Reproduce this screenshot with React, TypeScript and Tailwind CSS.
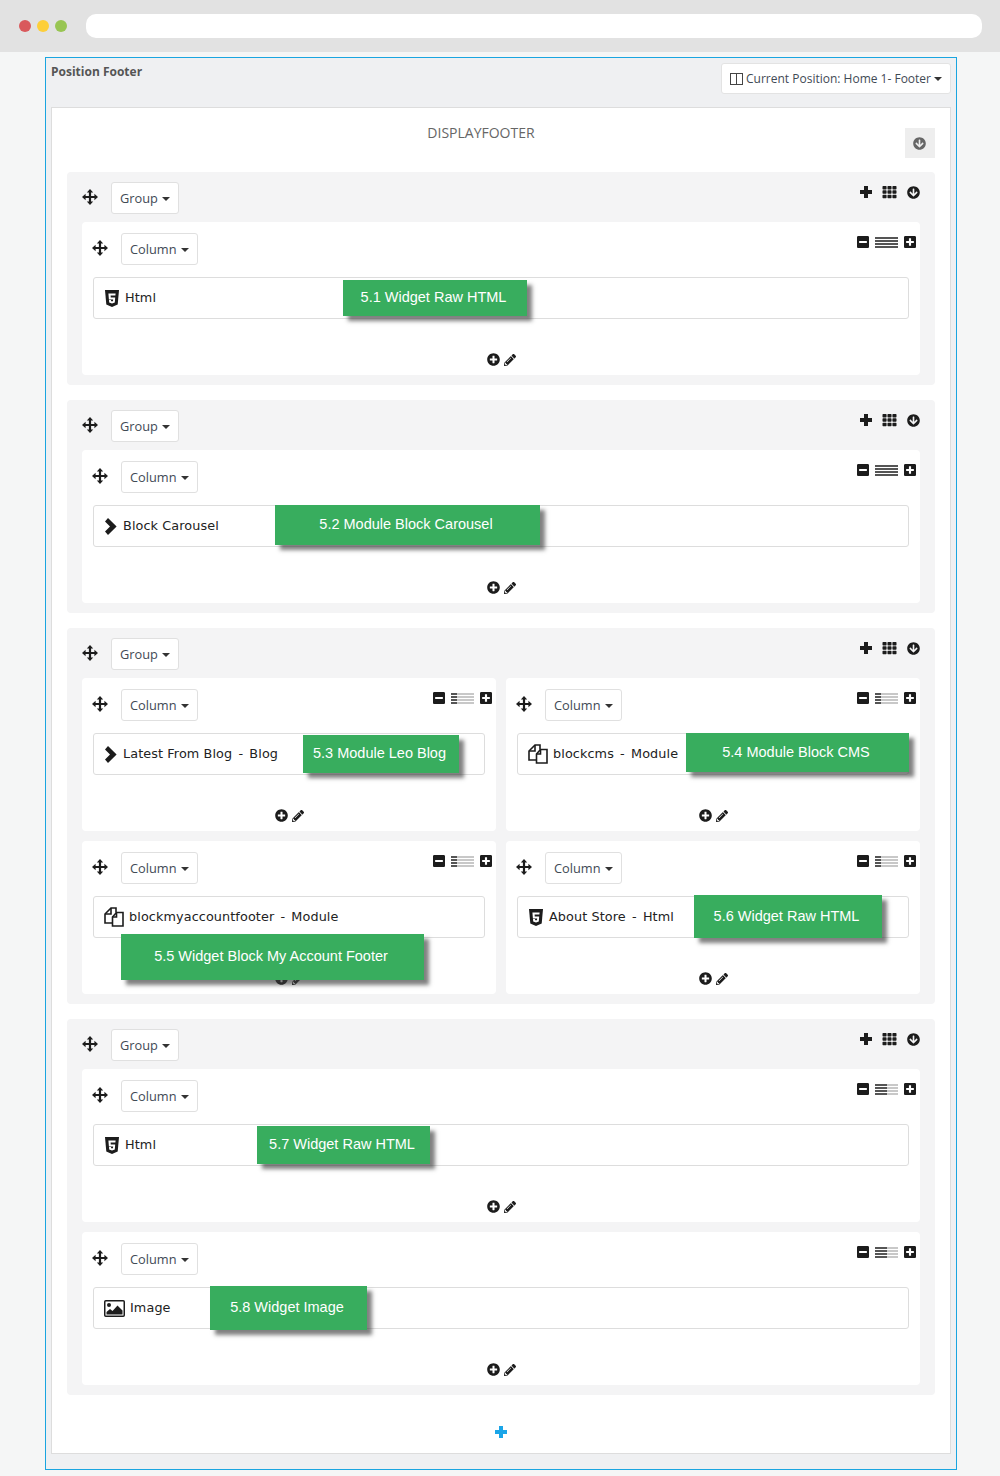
import { ReactNode } from "react";
import {
  FaArrowCircleDown,
  FaMinusSquare,
  FaPencilAlt,
  FaPlusCircle,
  FaPlusSquare,
  FaTh,
} from "react-icons/fa";

const Caret = () => (
  <span className="ml-[4px] inline-block h-0 w-0 border-x-[4px] border-t-[4px] border-x-transparent border-t-[#333]" />
);

const MoveIcon = () => (
  <svg viewBox="0 0 16 16" className="h-[16px] w-[16px] text-[#1c1c1c]" fill="currentColor">
    <path d="M8 0l3.2 3.6H9.1v3.3h3.3V4.8L16 8l-3.6 3.2V9.1H9.1v3.3h2.1L8 16l-3.2-3.6h2.1V9.1H3.6v2.1L0 8l3.6-3.2v2.1h3.3V3.6H4.8z" />
  </svg>
);

const PlusIcon = ({ color }: { color: string }) => (
  <svg viewBox="0 0 12 12" className={`h-[12px] w-[12px] ${color}`} fill="currentColor">
    <path d="M4 0h4v4h4v4H8v4H4V8H0V4h4z" />
  </svg>
);

const ChevronIcon = () => (
  <svg viewBox="0 0 13 17" className="h-[17px] w-[13px] text-[#1c1c1c]" fill="currentColor">
    <path d="M1 3.4L4 0l8.6 8.5L4 17l-3-3.4 5-5.1z" />
  </svg>
);

const Html5Icon = () => (
  <svg viewBox="0 0 14 17" className="ml-[1px] h-[17px] w-[14px]">
    <path d="M0 0h14l-1.3 14.6L7 17l-5.7-2.4z" fill="#1c1c1c" />
    <path d="M3.4 3.4h7.2l-.2 2H5.6l.15 2h4.45l-.4 5L7 13.4l-2.8-.9-.2-2.4h2l.1 1 .9.3 1-.3.15-1.7H3.9z" fill="#fff" />
  </svg>
);

const ImageIcon = () => (
  <svg viewBox="0 0 21 17" className="h-[17px] w-[21px] text-[#1c1c1c]">
    <rect x="0.75" y="0.75" width="19.5" height="15.5" rx="1" fill="none" stroke="currentColor" strokeWidth="1.5" />
    <circle cx="5" cy="5" r="2" fill="currentColor" />
    <path d="M2.5 14.5v-2.5l3.5-3 2.5 2 5-5.5 5 5v4z" fill="currentColor" />
  </svg>
);

const CopyIcon = () => (
  <svg viewBox="0 0 20 20" className="h-[20px] w-[20px] text-[#1c1c1c]" fill="none" stroke="currentColor" strokeWidth="1.6">
    <path d="M12 5.5V1H7L1 7v9h7" />
    <path d="M7 1v6H1" />
    <path d="M8.5 19V10l4-4.5H19V19z" />
    <path d="M12.5 5.5V10H8.5" />
  </svg>
);

const ColumnsIcon = () => (
  <svg viewBox="0 0 13 12" className="h-[12px] w-[13px] text-[#444]" fill="none" stroke="currentColor" strokeWidth="1">
    <rect x="0.5" y="0.5" width="12" height="11" />
    <path d="M6.5 0.5v11" />
  </svg>
);

// four stripes, the dark part shows how wide the column is set
const WidthIcon = ({ dark }: { dark: number }) => (
  <svg viewBox="0 0 23 11" className="h-[11px] w-[23px]">
    {[0, 3, 6, 9].map((y) => (
      <g key={y}>
        <rect x="0" y={y} width="23" height="2" fill="#c8c8c8" />
        <rect x="0" y={y} width={dark} height="2" fill="#555" />
      </g>
    ))}
  </svg>
);

const DropButton = ({ label }: { label: string }) => (
  <button className="flex h-[32px] items-center rounded-[3px] border border-[#e0e0e0] bg-white pl-[8px] pr-[8px] pt-[2px] text-[12.8px] text-[#3f4a55]">
    {label}
    <Caret />
  </button>
);

type Widget = {
  icon: ReactNode;
  name: string;
  kind?: string;
  gap: string;
  label: string;
  labelClass: string;
};

const html5 = <Html5Icon />;
const chevron = <ChevronIcon />;
const copy = <CopyIcon />;
const image = <ImageIcon />;

const Column = ({ widget, dark, half }: { widget: Widget; dark: number; half?: boolean }) => (
  <div className={`h-[153px] rounded-[4px] bg-white px-[11px] pt-[11px] ${half ? "min-w-0 flex-1" : ""}`}>
    <div className="flex items-start">
      <div className="ml-[-1px] mt-[7px] mr-[13px]">
        <MoveIcon />
      </div>
      <DropButton label="Column" />
      <div className="ml-auto mt-[2px] mr-[-7px] flex items-center gap-[6px]">
        <FaMinusSquare className="h-[14px] w-[12px] text-[#1c1c1c]" />
        <WidthIcon dark={dark} />
        <FaPlusSquare className="h-[14px] w-[12px] text-[#1c1c1c]" />
      </div>
    </div>
    <div className="relative mt-[12px] flex h-[42px] items-center rounded-[3px] border border-[#ddd] pl-[10px] font-['DejaVu_Sans',sans-serif] text-[12.8px] tracking-[0.1px] text-[#222]">
      <span className={`flex items-center ${widget.gap}`}>
        {widget.icon}
        <span>
          {widget.name}
          {widget.kind && (
            <>
              {" "}
              <span className="mx-[2px]">-</span> {widget.kind}
            </>
          )}
        </span>
      </span>
      <div
        className={`absolute flex items-center justify-center bg-[#38ad5e] pr-[3px] font-['Liberation_Sans',sans-serif] text-[14.5px] tracking-normal text-white shadow-[5px_5px_4px_rgba(60,60,60,0.65)] ${widget.labelClass}`}
      >
        {widget.label}
      </div>
    </div>
    <div className="mt-[34px] flex items-center justify-center gap-[4px] pl-[1px]">
      <FaPlusCircle className="h-[13px] w-[13px] text-[#1c1c1c]" />
      <FaPencilAlt className="h-[12px] w-[12px] text-[#1c1c1c]" />
    </div>
  </div>
);

const Group = ({ children }: { children: ReactNode }) => (
  <div className="flex flex-col rounded-[4px] bg-[#f4f4f5] px-[15px] pb-[10px] pt-[10px]">
    <div className="flex items-start">
      <div className="mt-[7px] mr-[13px]">
        <MoveIcon />
      </div>
      <DropButton label="Group" />
      <div className="ml-auto mt-[3px] flex items-center gap-[10px]">
        <PlusIcon color="text-[#1c1c1c]" />
        <FaTh className="h-[14px] w-[15px] text-[#1c1c1c]" />
        <FaArrowCircleDown className="h-[13px] w-[13px] text-[#1c1c1c]" />
      </div>
    </div>
    <div className="mt-[8px] flex flex-col gap-[10px]">{children}</div>
  </div>
);

const w: Record<string, Widget> = {
  a: { icon: html5, name: "Html", gap: "gap-[6px]", label: "5.1 Widget Raw HTML", labelClass: "left-[249px] top-[2px] h-[36px] w-[184px]" },
  b: { icon: chevron, name: "Block Carousel", gap: "gap-[6px]", label: "5.2 Module Block Carousel", labelClass: "left-[181px] top-[-1px] h-[40px] w-[265px]" },
  c: { icon: chevron, name: "Latest From Blog", kind: "Blog", gap: "gap-[6px]", label: "5.3 Module Leo Blog", labelClass: "left-[209px] top-[1px] h-[38px] w-[156px]" },
  d: { icon: copy, name: "blockcms", kind: "Module", gap: "gap-[5px]", label: "5.4 Module Block CMS", labelClass: "left-[168px] top-[-1px] h-[39px] w-[223px]" },
  e: { icon: copy, name: "blockmyaccountfooter", kind: "Module", gap: "gap-[5px]", label: "5.5 Widget Block My Account Footer", labelClass: "left-[27px] top-[37px] h-[46px] w-[303px]" },
  f: { icon: html5, name: "About Store", kind: "Html", gap: "gap-[6px]", label: "5.6 Widget Raw HTML", labelClass: "left-[176px] top-[-2px] h-[43px] w-[188px]" },
  g: { icon: html5, name: "Html", gap: "gap-[6px]", label: "5.7 Widget Raw HTML", labelClass: "left-[163px] top-[1px] h-[38px] w-[173px]" },
  h: { icon: image, name: "Image", gap: "gap-[5px]", label: "5.8 Widget Image", labelClass: "left-[116px] top-[-2px] h-[44px] w-[157px]" },
};

export default function App() {
  return (
    <div className="h-[1476px] w-[1000px] overflow-hidden bg-[#f5f6f6] font-['Open_Sans',sans-serif]">
      {/* browser chrome */}
      <div className="flex h-[52px] items-center bg-[#e2e2e2] pl-[19px] pr-[18px]">
        <div className="flex gap-[6px]">
          <span className="h-[12px] w-[12px] rounded-full bg-[#d9595c]" />
          <span className="h-[12px] w-[12px] rounded-full bg-[#fdcf3a]" />
          <span className="h-[12px] w-[12px] rounded-full bg-[#98c552]" />
        </div>
        <div className="ml-[19px] h-[24px] flex-1 rounded-[10px] bg-white" />
      </div>

      <div className="mx-[45px] mt-[5px] h-[1413px] w-[912px] border border-[#1aa5e0] bg-[#eff0f2] px-[5px]">
        <div className="flex h-[49px] items-start justify-between">
          <div className="mt-[5px] text-[12px] font-bold text-[#555]">Position Footer</div>
          <button className="mt-[5px] flex h-[31px] items-center rounded-[3px] border border-[#e3e3e3] bg-white pl-[8px] pr-[8px] text-[12px] text-[#3f4a55]">
            <ColumnsIcon />
            <span className="ml-[3px] mr-[-1px]">Current Position: Home 1- Footer</span>
            <Caret />
          </button>
        </div>

        <div className="h-[1347px] border border-[#ddd] bg-white px-[15px]">
          <div className="relative h-[64px] pr-[40px] pt-[14px] text-center text-[14px] text-[#666]">
            DISPLAYFOOTER
            <div className="absolute right-0 top-[20px] flex h-[30px] w-[30px] items-center justify-center bg-[#eee] pr-[1px]">
              <FaArrowCircleDown className="h-[13px] w-[13px] text-[#666]" />
            </div>
          </div>

          <div className="flex flex-col gap-[15px]">
            <Group>
              <Column widget={w.a} dark={23} />
            </Group>
            <Group>
              <Column widget={w.b} dark={23} />
            </Group>
            <Group>
              <div className="flex gap-[10px]">
                <Column widget={w.c} dark={6} half />
                <Column widget={w.d} dark={6} half />
              </div>
              <div className="flex gap-[10px]">
                <Column widget={w.e} dark={6} half />
                <Column widget={w.f} dark={6} half />
              </div>
            </Group>
            <Group>
              <Column widget={w.g} dark={12} />
              <Column widget={w.h} dark={12} />
            </Group>
          </div>

          <div className="mt-[31px] flex justify-center">
            <PlusIcon color="text-[#1aa5e8]" />
          </div>
        </div>
      </div>
    </div>
  );
}
